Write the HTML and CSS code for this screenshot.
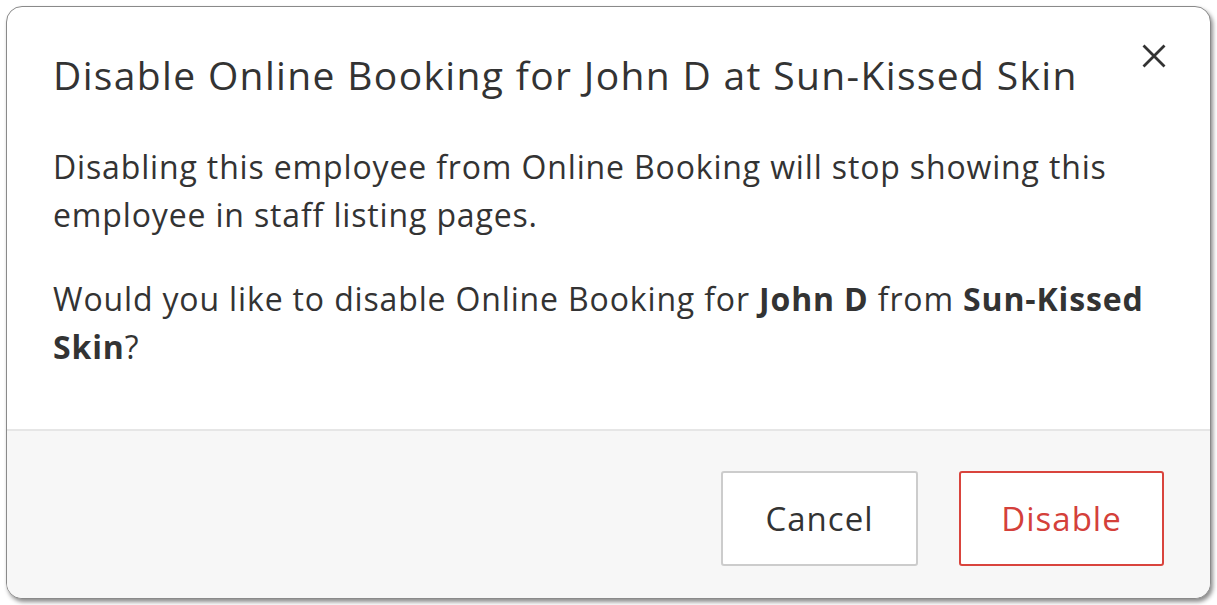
FILE: index.html
```html
<!DOCTYPE html>
<html lang="en">
<head>
    <meta charset="UTF-8">
    <meta name="viewport" content="width=device-width, initial-scale=1.0">
    <title>Disable Online Booking</title>
    <link rel="stylesheet" href="styles.css">
</head>
<body>
    <div class="modal">
        <div class="modal-header">
            <h1 class="modal-title">Disable Online Booking for John D at Sun-Kissed Skin</h1>
            <button class="close-button" aria-label="Close">
                <svg width="24" height="24" viewBox="0 0 24 24">
                    <path d="M1.5 1.5 L22.5 22.5 M22.5 1.5 L1.5 22.5" stroke="#333" stroke-width="2.8" fill="none"/>
                </svg>
            </button>
        </div>
        <div class="modal-body">
            <p>Disabling this employee from Online Booking will stop showing this employee in staff listing pages.</p>
            <p>Would you like to disable Online Booking for <b>John D</b> from <b>Sun-Kissed Skin</b>?</p>
        </div>
        <div class="modal-footer">
            <button class="btn btn-default">Cancel</button>
            <button class="btn btn-danger">Disable</button>
        </div>
    </div>
</body>
</html>
```

FILE: styles.css
```css
html, body {
    margin: 0;
    padding: 0;
    background: #fff;
    font-family: "Open Sans", Lato, sans-serif;
    color: #333;
}

body {
    padding: 6px;
}

.modal {
    width: 1205px;
    height: 593px;
    box-sizing: border-box;
    display: flex;
    flex-direction: column;
    border: 1px solid #8a8a8a;
    border-radius: 16px;
    box-shadow: 2px 3px 4px rgba(0, 0, 0, 0.45);
    overflow: hidden;
    background: #fff;
}

.modal-header {
    display: flex;
    align-items: flex-start;
    justify-content: space-between;
    padding: 44px 46px 0 46px;
}

.modal-title {
    margin: 0;
    font-size: 39px;
    font-weight: 400;
    line-height: 48px;
    letter-spacing: 1.35px;
    white-space: nowrap;
}

.close-button {
    margin: -7px -2px 0 0;
    padding: 0;
    border: none;
    background: none;
    cursor: pointer;
    width: 24px;
    height: 24px;
}

.modal-body {
    flex: 1;
    padding: 44px 46px 0 46px;
    font-size: 32px;
    line-height: 48px;
    letter-spacing: 0.85px;
}

.modal-body p {
    margin: 0 0 36px 0;
}

.modal-body b {
    font-weight: 700;
}

.modal-footer {
    display: flex;
    justify-content: flex-end;
    gap: 41px;
    padding: 40px 46px 32px 46px;
    background: #f7f7f7;
    border-top: 2px solid #e6e6e6;
}

.btn {
    height: 95px;
    padding: 0;
    font-family: inherit;
    font-size: 33px;
    letter-spacing: 1px;
    border-radius: 3px;
    background: #fff;
    cursor: pointer;
}

.btn-default {
    width: 197px;
    border: 2px solid #cccccc;
    color: #333;
}

.btn-danger {
    width: 205px;
    border: 2px solid #d9443d;
    color: #d4403a;
}
```
